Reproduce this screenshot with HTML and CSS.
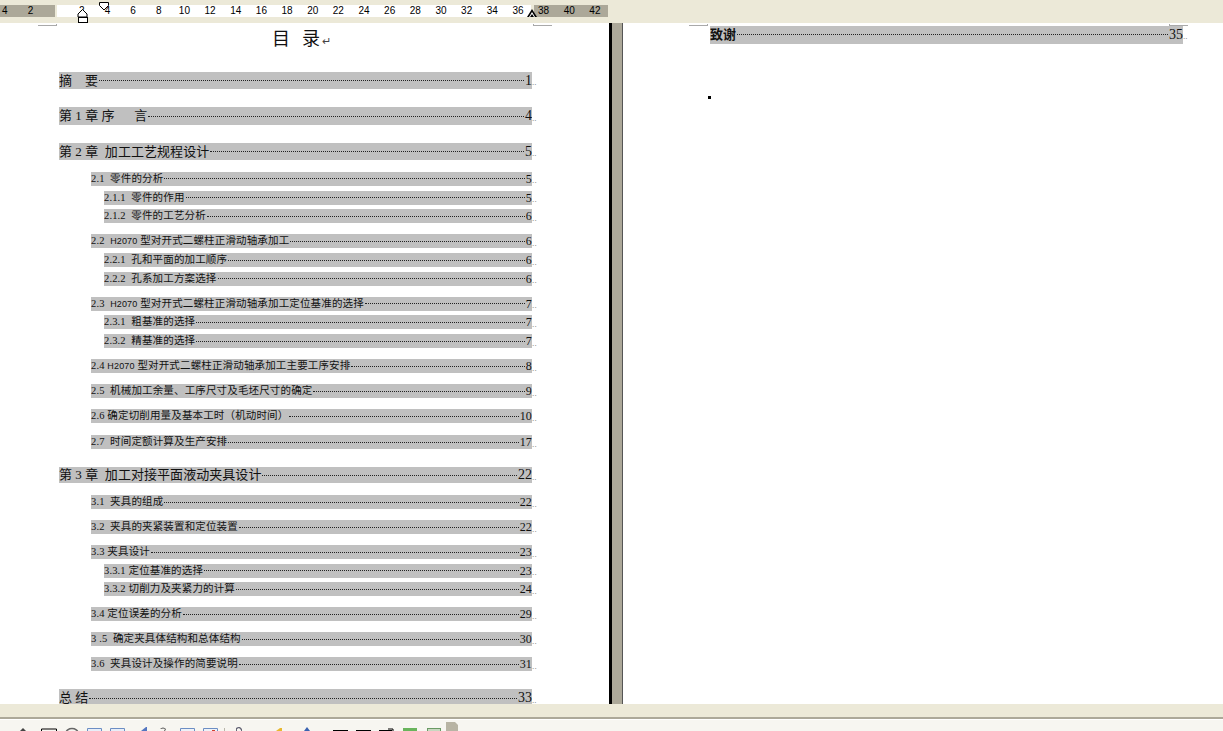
FILE: index.html
```html
<!DOCTYPE html>
<html lang="zh-CN">
<head>
    <meta charset="UTF-8">
    <title>目录</title>
    <link rel="stylesheet" href="styles.css">
</head>
<body>
    <div class="topbar">
        <div class="ruler">
            <span>4</span><span>2</span><span></span><span>2</span><span>4</span><span>6</span><span>8</span><span>10</span><span>12</span><span>14</span><span>16</span><span>18</span><span>20</span><span>22</span><span>24</span><span>26</span><span>28</span><span>30</span><span>32</span><span>34</span><span>36</span><span>38</span><span>40</span><span>42</span>
        </div>
        <svg class="ruler-marks" width="610" height="24" viewBox="0 0 610 24">
            <path d="M99.500 2.500h9v3l-4.500 4.500l-4.500-4.500z" fill="#fff" stroke="#000"/>
            <path d="M82.500 9.500l4.500 4.500v3h-9v-3z" fill="#fff" stroke="#000"/>
            <rect x="78.500" y="17.500" width="9" height="5" fill="#fff" stroke="#000"/>
            <path d="M532 9l5 8h-10z" fill="#000"/>
            <path d="M532 12l3 5h-1l-2-3-2 3h-1z" fill="#fff"/>
        </svg>
    </div>

    <div class="main">
        <div class="page page-left">
            <i class="crop crop-l" style="left:38px"></i>
            <i class="crop crop-r" style="left:533px"></i>
            <h1 class="title">目&#8194;录<span class="return">↵</span></h1>
            <div class="toc">
                <div class="row lv1"><div class="bar"><span>摘&#8195;要</span><i></i><span>1</span></div><b>..</b></div>
                <div class="row lv1"><div class="bar"><span>第 1 章 序&#8195;  言</span><i></i><span>4</span></div><b>..</b></div>
                <div class="row lv1"><div class="bar"><span>第 2 章  加工工艺规程设计</span><i></i><span>5</span></div><b>..</b></div>
                <div class="row lv2"><div class="bar"><span>2.1  零件的分析</span><i></i><span>5</span></div><b>..</b></div>
                <div class="row lv3"><div class="bar"><span>2.1.1  零件的作用</span><i></i><span>5</span></div><b>..</b></div>
                <div class="row lv3"><div class="bar"><span>2.1.2  零件的工艺分析</span><i></i><span>6</span></div><b>..</b></div>
                <div class="row lv2"><div class="bar"><span>2.2  <small>H2070</small> 型对开式二螺柱正滑动轴承加工</span><i></i><span>6</span></div><b>..</b></div>
                <div class="row lv3"><div class="bar"><span>2.2.1  孔和平面的加工顺序</span><i></i><span>6</span></div><b>..</b></div>
                <div class="row lv3"><div class="bar"><span>2.2.2  孔系加工方案选择</span><i></i><span>6</span></div><b>..</b></div>
                <div class="row lv2"><div class="bar"><span>2.3  <small>H2070</small> 型对开式二螺柱正滑动轴承加工定位基准的选择</span><i></i><span>7</span></div><b>..</b></div>
                <div class="row lv3"><div class="bar"><span>2.3.1  粗基准的选择</span><i></i><span>7</span></div><b>..</b></div>
                <div class="row lv3"><div class="bar"><span>2.3.2  精基准的选择</span><i></i><span>7</span></div><b>..</b></div>
                <div class="row lv2"><div class="bar"><span>2.4 <small>H2070</small> 型对开式二螺柱正滑动轴承加工主要工序安排</span><i></i><span>8</span></div><b>..</b></div>
                <div class="row lv2"><div class="bar"><span>2.5  机械加工余量、工序尺寸及毛坯尺寸的确定</span><i></i><span>9</span></div><b>..</b></div>
                <div class="row lv2"><div class="bar"><span>2.6 确定切削用量及基本工时（机动时间）</span><i></i><span>10</span></div><b>..</b></div>
                <div class="row lv2 gap"><div class="bar"><span>2.7  时间定额计算及生产安排</span><i></i><span>17</span></div><b>..</b></div>
                <div class="row lv1 sec3"><div class="bar"><span>第 3 章  加工对接平面液动夹具设计</span><i></i><span>22</span></div><b>..</b></div>
                <div class="row lv2"><div class="bar"><span>3.1  夹具的组成</span><i></i><span>22</span></div><b>..</b></div>
                <div class="row lv2"><div class="bar"><span>3.2  夹具的夹紧装置和定位装置</span><i></i><span>22</span></div><b>..</b></div>
                <div class="row lv2"><div class="bar"><span>3.3 夹具设计</span><i></i><span>23</span></div><b>..</b></div>
                <div class="row lv3"><div class="bar"><span>3.3.1 定位基准的选择</span><i></i><span>23</span></div><b>..</b></div>
                <div class="row lv3"><div class="bar"><span>3.3.2 切削力及夹紧力的计算</span><i></i><span>24</span></div><b>..</b></div>
                <div class="row lv2"><div class="bar"><span>3.4 定位误差的分析</span><i></i><span>29</span></div><b>..</b></div>
                <div class="row lv2"><div class="bar"><span>3 .5  确定夹具体结构和总体结构</span><i></i><span>30</span></div><b>..</b></div>
                <div class="row lv2"><div class="bar"><span>3.6  夹具设计及操作的简要说明</span><i></i><span>31</span></div><b>..</b></div>
                <div class="row lv1"><div class="bar"><span>总 结</span><i></i><span>33</span></div><b>..</b></div>
            </div>
        </div>
        <div class="divider"></div>
        <div class="page page-right">
            <i class="crop crop-l" style="left:66px"></i>
            <i class="crop crop-r" style="left:546px"></i>
            <div class="row lv1 thanks"><div class="bar"><span class="strong">致谢</span><i></i><span>35</span></div><b>..</b></div>
            <div class="para-dot"></div>
        </div>
    </div>

    <div class="statusbar"></div>
    <div class="toolbar">
        <svg width="470" height="11" viewBox="0 720 470 11">
            <path d="M20 731l3-3 3 3z" fill="#444"/>
            <path d="M41.500 731v-2h15v2" fill="none" stroke="#000"/>
            <ellipse cx="72" cy="733" rx="6" ry="4.500" fill="none" stroke="#666" stroke-width="1.500"/>
            <path d="M87.500 731v-2.500h14v2.500" fill="#e8eef8" stroke="#6c8ec4"/>
            <path d="M110.500 731v-2.500h14v2.500" fill="#e8eef8" stroke="#6c8ec4"/>
            <path d="M141 731l5-4h1v4z" fill="#5476c0"/>
            <path d="M160 729q3-3 6 0l-1 2h-1l1-2q-2-1-4 0z" fill="#555"/>
            <path d="M180.500 731v-2.500h14v2.500" fill="#eef2f8" stroke="#6c8ec4"/>
            <path d="M203.500 731v-2.500h14v2.500" fill="#eef2f8" stroke="#6c8ec4"/>
            <rect x="212" y="730" width="3" height="1" fill="#d04030"/>
            <path d="M224.500 728v3" stroke="#b8b6aa"/>
            <path d="M236 731v-3l2-1h2l2 2v2h-1v-1l-2-2-2 1v2z" fill="#667"/>
            <path d="M276 731l4-3h2v3z" fill="#e8b830"/>
            <path d="M304 731l3-4 3 4z" fill="#3a62b0"/>
            <path d="M333 730.500h15M356 730.500h15M379 730.500h13" stroke="#000"/>
            <path d="M388 729h5v2" fill="none" stroke="#000"/>
            <rect x="403" y="728" width="14" height="3" fill="#69b45c"/>
            <rect x="427.500" y="728.500" width="13" height="3" fill="#c8d8c0" stroke="#6a9a64"/>
            <path d="M446 722h9l3 3v6h-12z" fill="#b8b4a4"/>
        </svg>
    </div>
</body>
</html>
```

FILE: styles.css
```css
html, body {
    margin: 0;
    padding: 0;
    height: 100%;
    overflow: hidden;
}
body {
    display: flex;
    flex-direction: column;
    height: 731px;
    background: #ECE9D8;
    color: #111;
    font-family: "Liberation Serif", "Noto Sans CJK SC", serif;
}
.topbar {
    position: relative;
    flex: none;
    height: 23px;
    padding-top: 5px;
    box-sizing: border-box;
    background: #ECE9D8;
}
.ruler {
    display: flex;
    width: 608px;
    height: 12px;
    overflow: hidden;
    font: 10px/12px "Liberation Sans", sans-serif;
    color: #000;
    background: linear-gradient(to right, #ACA899 55px, #ECE9D8 55px, #ECE9D8 57px, #fff 57px, #fff 531px, #ECE9D8 531px, #ECE9D8 534px, #ACA899 534px);
}
.ruler span {
    flex: none;
    width: 25.67px;
    text-align: center;
}
.ruler span:first-child {
    margin-left: -8px;
}
.ruler-marks {
    position: absolute;
    left: 0;
    top: 0;
}
.main {
    display: flex;
    flex: none;
    height: 681px;
    overflow: hidden;
    background: #fff;
}
.page {
    position: relative;
    overflow: hidden;
}
.page-left {
    flex: none;
    width: 609px;
}
.page-right {
    flex: 1;
    padding-left: 87px;
}
.divider {
    flex: none;
    width: 10px;
    background: #ACA899;
    border-left: 3px solid #000;
    border-right: 1px solid #555;
}
.crop {
    position: absolute;
    top: 1px;
    width: 18px;
    height: 1px;
    border-bottom: 1px solid #a9a9a9;
}
.crop-l {
    border-right: 1px solid #a9a9a9;
}
.crop-r {
    border-left: 1px solid #a9a9a9;
}
.title {
    margin: 0;
    padding: 4px 0 0 272px;
    height: 24px;
    font-size: 18px;
    line-height: 24px;
    font-weight: normal;
    white-space: pre;
    letter-spacing: 1.500px;
}
.return {
    font-size: 11px;
    letter-spacing: 0;
    color: #444;
}
.toc {
    width: 478px;
    padding-left: 59px;
    padding-top: 20.900px;
}
.row {
    display: flex;
    align-items: center;
    white-space: pre;
}
.bar {
    display: flex;
    flex: 1;
    align-items: center;
    height: 100%;
    background: #C0C0C0;
    overflow: hidden;
}
.bar span {
    line-height: 12px;
}
.bar i {
    flex: 1;
    min-width: 0;
    margin: 0 1px;
    border-bottom: 1px dotted #222;
}
.row b {
    flex: none;
    width: 5px;
    padding-top: 4px;
    font-size: 9px;
    font-weight: normal;
    line-height: 1;
    color: #777;
}
.lv1 {
    height: 17.500px;
    margin-top: 18px;
    font-size: 13px;
    letter-spacing: 0.050px;
}
.lv1:first-child {
    margin-top: 0;
}
.lv1 .bar span:last-child {
    font-size: 14px;
}
.lv2 {
    height: 14px;
    margin-top: 11px;
    margin-left: 32px;
}
.lv3 {
    height: 14px;
    margin-top: 4.700px;
    margin-left: 45px;
}
.lv2, .lv3 {
    font-size: 10.500px;
    letter-spacing: 0.150px;
}
.lv2 .bar span:last-child, .lv3 .bar span:last-child {
    font-size: 12px;
}
.lv1 + .lv2 {
    margin-top: 11.600px;
}
.lv2.gap {
    margin-top: 12px;
}
.sec3 {
    height: 16px;
}
.sec3 + .lv2 {
    margin-top: 12px;
}
.bar small {
    font-size: 9px;
    font-family: "Liberation Sans", sans-serif;
}
.thanks {
    width: 478px;
    margin-top: 3px;
}
.strong {
    font-weight: bold;
}
.para-dot {
    width: 3px;
    height: 3px;
    margin: 52px 0 0 -2px;
    background: #000;
}
.statusbar {
    flex: none;
    height: 13px;
    background: #ECE9D8;
    border-bottom: 2px solid #ACA899;
}
.toolbar {
    flex: none;
    height: 12px;
    overflow: hidden;
    background: #F7F6F1;
    border-top: 1px solid #fff;
    box-sizing: border-box;
}
.toolbar svg {
    display: block;
}
```
